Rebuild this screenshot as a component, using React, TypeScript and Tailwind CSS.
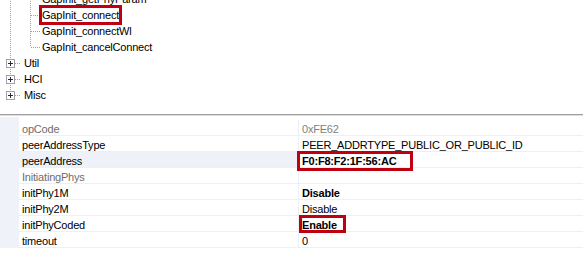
import React from "react";

const vLine = "absolute w-px bg-[repeating-linear-gradient(to_bottom,#a0a0a0_0_1px,transparent_1px_2px)]";
const hLine = "absolute h-px bg-[repeating-linear-gradient(to_right,#a0a0a0_0_1px,transparent_1px_2px)]";

function Leaf({ label, last }: { label: string; last?: boolean }) {
  return (
    <div className="flex h-[16px] items-center">
      <div className="relative h-full w-[20px] shrink-0">
        <div className={`${vLine} left-[10px] top-0 h-full`} />
      </div>
      <div className="relative h-full w-[20px] shrink-0">
        <div className={`${vLine} left-[10px] top-0 ${last ? "h-[8px]" : "h-full"}`} />
        <div className={`${hLine} left-[11px] top-[8px] w-[9px]`} />
      </div>
      <span className="whitespace-nowrap pl-[2px] leading-[16px]">{label}</span>
    </div>
  );
}

function Folder({ label, last }: { label: string; last?: boolean }) {
  return (
    <div className="flex h-[16px] items-center">
      <div className="relative h-full w-[20px] shrink-0">
        <div className={`${vLine} left-[10px] top-0 ${last ? "h-[4px]" : "h-full"}`} />
        <div className={`${hLine} left-[15px] top-[8px] w-[5px]`} />
        <div className="absolute left-[6px] top-[4px] flex h-[9px] w-[9px] items-center justify-center border border-[#a0a0a0] bg-white">
          <div className="relative h-[5px] w-[5px]">
            <div className="absolute left-0 top-[2px] h-px w-[5px] bg-[#1e2a4a]" />
            <div className="absolute left-[2px] top-0 h-[5px] w-px bg-[#1e2a4a]" />
          </div>
        </div>
      </div>
      <span className="pl-[4px] leading-[16px]">{label}</span>
    </div>
  );
}

type Row = { name: string; value: string; gray?: boolean; bold?: boolean; sel?: boolean };

const rows: Row[] = [
  { name: "opCode", value: "0xFE62", gray: true },
  { name: "peerAddressType", value: "PEER_ADDRTYPE_PUBLIC_OR_PUBLIC_ID" },
  { name: "peerAddress", value: "F0:F8:F2:1F:56:AC", bold: true, sel: true },
  { name: "InitiatingPhys", value: "", gray: true },
  { name: "initPhy1M", value: "Disable", bold: true },
  { name: "initPhy2M", value: "Disable" },
  { name: "initPhyCoded", value: "Enable", bold: true },
  { name: "timeout", value: "0" },
];

export default function App() {
  return (
    <div
      className="relative h-[256px] w-[583px] overflow-hidden bg-white text-[11px] tracking-[-0.2px] text-black"
      style={{ fontFamily: '"Liberation Sans", Arial, sans-serif' }}
    >
      <div className="-mt-[9px] flex flex-col">
        <Leaf label="GapInit_getPhyParam" />
        <Leaf label="GapInit_connect" />
        <Leaf label="GapInit_connectWl" />
        <Leaf label="GapInit_cancelConnect" last />
        <Folder label="Util" />
        <Folder label="HCI" />
        <Folder label="Misc" last />
      </div>

      <div className="mt-[11px] h-px bg-[#a0a0a0]" />
      <div className="h-px bg-[#dcdcdc]" />

      <div className="mt-px flex">
        <div className="w-[19px] shrink-0 bg-[#f0f2f9]" />
        <div className="flex flex-1 flex-col pt-[3px]">
          {rows.map((r) => (
            <div
              key={r.name}
              className={`flex h-[16px] border-b border-[#eceff6] ${r.sel ? "bg-[#eef1f8]" : ""}`}
            >
              <div className={`w-[279px] shrink-0 truncate pl-[3px] pt-[2px] leading-[14px] ${r.gray ? "text-[#6d6d6d]" : ""}`}>
                {r.name}
              </div>
              <div
                className={`flex-1 border-l border-[#eceff6] pl-[3px] pt-[2px] leading-[14px] ${r.sel ? "bg-white" : ""} ${r.gray ? "text-[#808080]" : ""} ${r.bold ? "font-bold" : ""}`}
              >
                {r.value}
              </div>
            </div>
          ))}
        </div>
      </div>

      <div className="pointer-events-none absolute left-[39px] top-[5px] h-[20px] w-[83px] border-[3px] border-[#c00010]" />
      <div className="pointer-events-none absolute left-[297px] top-[151px] h-[20px] w-[116px] border-[3px] border-[#c00010]" />
      <div className="pointer-events-none absolute left-[299px] top-[215px] h-[18px] w-[47px] border-[3px] border-[#c00010]" />
    </div>
  );
}
